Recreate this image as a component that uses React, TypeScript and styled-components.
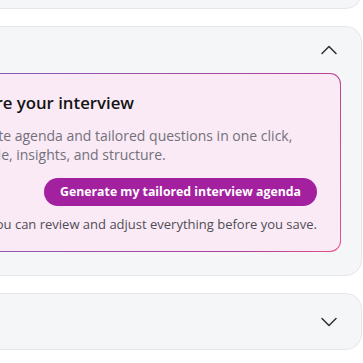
import React from "react";
import styled, { createGlobalStyle } from "styled-components";

const Global = createGlobalStyle`
  html, body { margin: 0; padding: 0; background: #ffffff; overflow: hidden; }
  body { font-family: "Open Sans", "Noto Sans", sans-serif; }
  * { box-sizing: border-box; }
`;

const Page = styled.div`
  width: 363px;
  display: flex;
  flex-direction: column;
  align-items: flex-end;
  gap: 17px;
  margin-top: -48px;
`;

const Card = styled.section`
  flex-shrink: 0;
  width: 460px;
  margin-right: 1px;
  background: #f5f6f8;
  border: 1px solid #e6e7eb;
  border-radius: 16px;
  display: flex;
  flex-direction: column;
`;

const Header = styled.div<{ $h: number }>`
  height: ${(p) => p.$h}px;
  display: flex;
  align-items: center;
  justify-content: flex-end;
  padding-right: 24px;
  color: #2f2f35;
`;

const Body = styled.div`
  padding: 0 20px 23px 20px;
`;

const Panel = styled.div`
  border: 1.5px solid transparent;
  border-radius: 11px;
  background:
    linear-gradient(#f9eaf6, #f9eaf6) padding-box,
    linear-gradient(110deg, #7d5fc0 0%, #9656ab 40%, #b0409a 80%, #e8508a 100%) border-box;
  padding: 15.5px 23px 17.5px 24px;
  display: flex;
  flex-direction: column;
`;

const Title = styled.h2`
  margin: 0;
  font-size: 16.8px;
  line-height: 26px;
  font-weight: 600;
  color: #141414;
`;

const Desc = styled.p`
  margin: 10px 0 0 0;
  font-size: 14px;
  line-height: 19px;
  color: #74707a;
`;

const Actions = styled.div`
  margin-top: 14px;
  display: flex;
  flex-direction: column;
  align-items: flex-end;
  gap: 9px;
`;

const Button = styled.button`
  height: 28px;
  padding: 0 16px;
  border: none;
  border-radius: 14px;
  background: #a3219f;
  color: #ffffff;
  font-family: "Open Sans", "Noto Sans", sans-serif;
  font-size: 12.3px;
  font-weight: 700;
  cursor: pointer;
`;

const Note = styled.p`
  margin: 0;
  font-size: 13px;
  line-height: 19px;
  color: #514d57;
  text-align: right;
`;

const Chevron = ({ up }: { up?: boolean }) => (
  <svg width="16" height="10" viewBox="0 0 16 10" fill="none">
    <polyline
      points={up ? "1,8.5 8,1.5 15,8.5" : "1,1.5 8,8.5 15,1.5"}
      stroke="currentColor"
      strokeWidth="1.5"
      strokeLinecap="round"
      strokeLinejoin="round"
    />
  </svg>
);

export default function App() {
  return (
    <>
      <Global />
      <Page>
        <Card>
          <Header $h={55} />
        </Card>
        <Card>
          <Header $h={46}>
            <Chevron up />
          </Header>
          <Body>
            <Panel>
              <Title>Prepare your interview</Title>
              <Desc>
                Complete agenda and tailored questions in one click,
                <br />
                from role, insights, and structure.
              </Desc>
              <Actions>
                <Button>Generate my tailored interview agenda</Button>
                <Note>You can review and adjust everything before you save.</Note>
              </Actions>
            </Panel>
          </Body>
        </Card>
        <Card>
          <Header $h={55}>
            <Chevron />
          </Header>
        </Card>
      </Page>
    </>
  );
}
